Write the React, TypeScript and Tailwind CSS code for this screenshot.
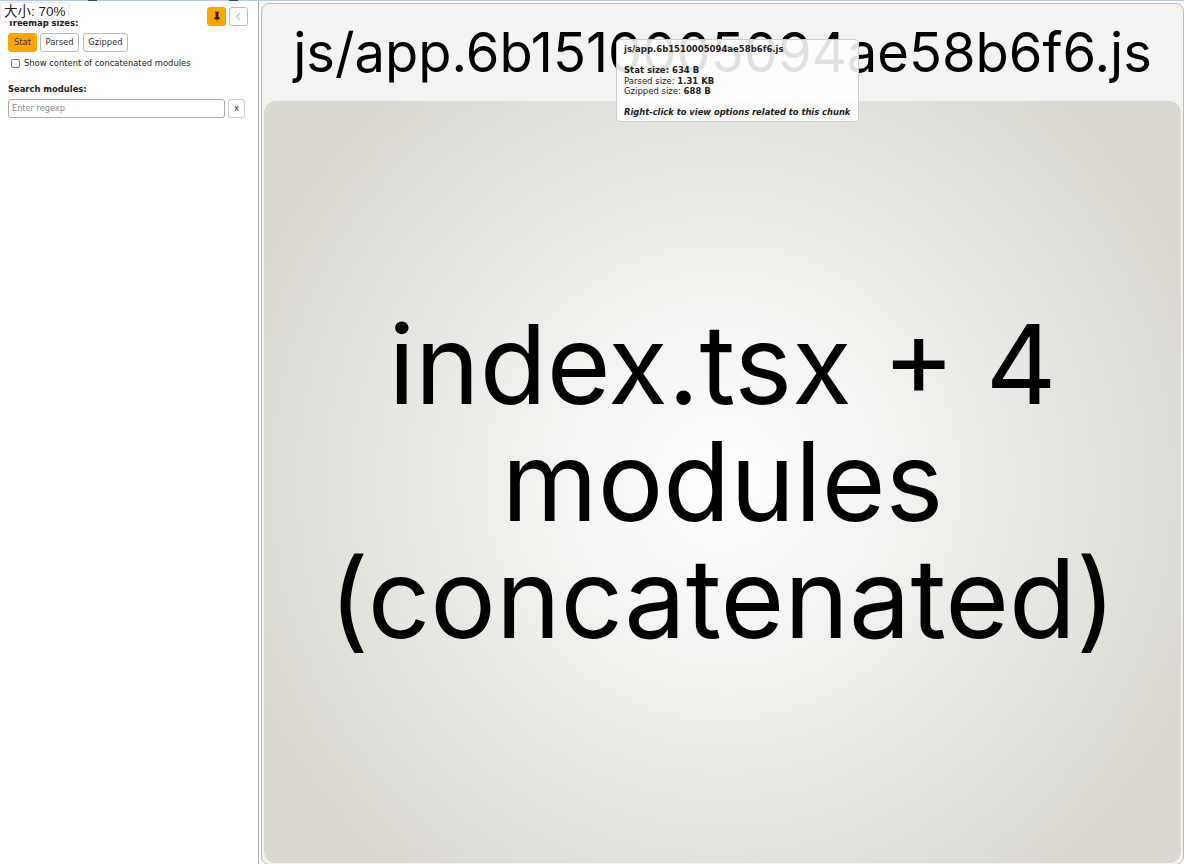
export default function App() {
  return (
    <div className="relative flex h-[864px] w-[1184px] overflow-hidden bg-white font-['DejaVu_Sans',sans-serif]">
      <div className="absolute left-0 top-0 z-20 h-[1px] w-full bg-[#b7c9e6]" />
      <div className="absolute left-[88px] top-0 z-20 h-[1px] w-[9px] bg-[#2a4a80]" />
      <div className="absolute left-[229px] top-0 z-20 h-[1px] w-[9px] bg-[#2a4a80]" />
      <div className="absolute left-[1px] top-[3px] z-20 h-[18px] w-[67px] rounded-[2px] bg-white pl-[3px] text-[13.5px] leading-[18px] text-[#222] shadow-[0_0_3px_rgba(0,0,0,0.25)] font-['Liberation_Sans','Noto_Sans_CJK_SC',sans-serif]">
        大小: 70%
      </div>

      <aside className="flex w-[259px] shrink-0 flex-col border-r border-[#aaa] pl-2 pr-[10px] pt-[7px] text-[#222]">
        <div className="flex h-[19px] justify-end gap-[3px]">
          <button className="flex h-[19px] w-[19px] items-center justify-center rounded-[3px] border border-[#f5a700] bg-[#ffa500]">
            <svg viewBox="0 0 16 16" className="h-[12px] w-[12px]" fill="#2b1f08">
              <path d="M5.5 1h5v1.2L9.8 3v4.5l2 2V11H8.6L8 15.5 7.4 11H4.2V9.5l2-2V3l-.7-.8z" />
            </svg>
          </button>
          <button className="flex h-[19px] w-[19px] items-center justify-center rounded-[3px] border border-[#bbb] bg-white">
            <svg viewBox="0 0 10 10" className="h-[9px] w-[9px]" fill="none" stroke="#999" strokeWidth="1">
              <path d="M6.5 1.5 3 5l3.5 3.5" />
            </svg>
          </button>
        </div>
        <div className="-mt-[9px] text-[8.4px] font-bold leading-[12px]">Treemap sizes:</div>
        <div className="mt-[4px] flex text-[8.4px]">
          <button className="h-[19px] w-[29px] rounded-[3px] border border-[#f5a700] bg-[#ffa500] text-[#333]">Stat</button>
          <button className="ml-[3px] h-[19px] w-[39px] rounded-[3px] border border-[#bbb] bg-white text-[#333]">Parsed</button>
          <button className="ml-[4px] h-[19px] w-[45px] rounded-[3px] border border-[#bbb] bg-white text-[#333]">Gzipped</button>
        </div>
        <label className="ml-[3px] mt-[5px] flex h-[12px] items-center gap-[4px] text-[8.4px] leading-[12px]">
          <span className="h-[9px] w-[9px] rounded-[2px] border border-[#767676] bg-white" />
          Show content of concatenated modules
        </label>
        <div className="mt-[14px] text-[8.4px] font-bold leading-[12px]">Search modules:</div>
        <div className="mt-[4px] flex gap-[3px]">
          <div className="flex h-[19px] w-[217px] items-center rounded-[3px] border border-[#aaa] bg-white pl-[3px] text-[8.2px] text-[#888]">Enter regexp</div>
          <button className="h-[19px] w-[17px] rounded-[3px] border border-[#ccc] bg-white text-[8.4px] text-[#333]">x</button>
        </div>
      </aside>

      <main className="ml-[2px] mt-[3px] flex h-[862px] w-[923px] flex-col rounded-[8px] border border-[#bdb9ad] bg-[#f3f3f1] font-['Inter',sans-serif]">
        <div className="flex h-[97px] shrink-0 items-center justify-center text-[54.3px] leading-none text-black">
          js/app.6b1510005094ae58b6f6.js
        </div>
        <div className="mx-[2px] mb-[1px] flex flex-1 items-center justify-center rounded-[12px] bg-[radial-gradient(circle_at_center,#ffffff_0%,#f3f3f1_28%,#dad8d1_85%)] text-center text-[109.5px] leading-[117px] text-black">
          <div className="-mt-[1px]">
            index.tsx + 4
            <br />
            modules
            <br />
            (concatenated)
          </div>
        </div>
      </main>

      <div className="absolute left-[616px] top-[39px] z-10 h-[83px] w-[243px] rounded-[4px] border border-[#ccc] bg-white/[0.88] px-[7px] pt-[4px] text-[8.5px] leading-[10.5px] text-[#222]">
        <div className="font-bold">js/app.6b1510005094ae58b6f6.js</div>
        <div className="mt-[10.5px] font-bold">Stat size: 634 B</div>
        <div>Parsed size: <b>1.31 KB</b></div>
        <div>Gzipped size: <b>688 B</b></div>
        <div className="mt-[10.5px] text-[8.35px] font-bold italic">Right-click to view options related to this chunk</div>
      </div>
    </div>
  );
}
